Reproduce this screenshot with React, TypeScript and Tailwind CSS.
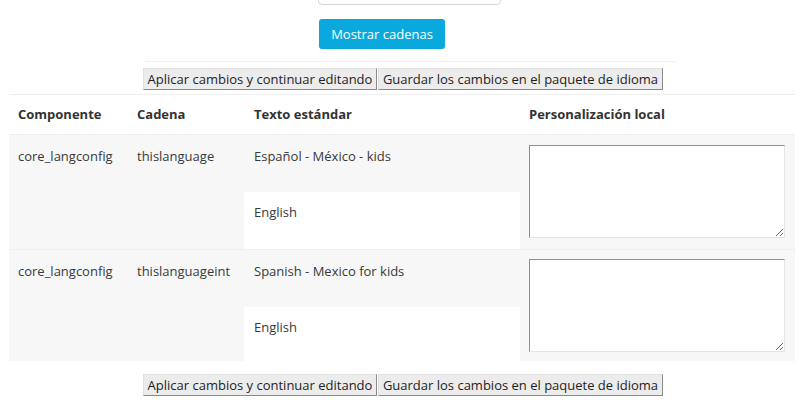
import React from "react";

const rows = [
  { comp: "core_langconfig", str: "thislanguage", std: "Español - México - kids", en: "English" },
  { comp: "core_langconfig", str: "thislanguageint", std: "Spanish - Mexico for kids", en: "English" },
];

function Buttons() {
  return (
    <div className="flex pl-[143px] gap-px">
      <button className="h-[22px] w-[234px] bg-[#ececec] border border-t-[#e0e0e0] border-l-[#e0e0e0] border-r-[#8a8a8a] border-b-[#8a8a8a] text-[13px] leading-[20px] text-[#1e1e1e] whitespace-nowrap">
        Aplicar cambios y continuar editando
      </button>
      <button className="h-[22px] w-[285px] bg-[#ececec] border border-t-[#e0e0e0] border-l-[#e0e0e0] border-r-[#8a8a8a] border-b-[#8a8a8a] text-[13px] leading-[20px] text-[#1e1e1e] whitespace-nowrap">
        Guardar los cambios en el paquete de idioma
      </button>
    </div>
  );
}

export default function App() {
  return (
    <div
      className="w-[800px] h-[409px] overflow-hidden bg-white text-[13px] text-[#373a3c]"
      style={{ fontFamily: '"Open Sans", "Liberation Sans", sans-serif' }}
    >
      <div className="pl-[318px] mt-[-26px]">
        <div className="w-[183px] h-[31px] border border-[#d6d6d6] rounded-[4px] bg-white" />
        <button className="mt-[14px] ml-px w-[126px] h-[30px] rounded-[3px] bg-[#0aa9dd] text-white text-[13px] leading-[30px]">
          Mostrar cadenas
        </button>
      </div>
      <div className="mt-[12px] ml-[145px] w-[531px] h-px bg-[#f0f0f0]" />
      <div className="mt-[6px]">
        <Buttons />
      </div>
      <div className="mt-[4px] ml-[9px] w-[786px]">
        <div className="flex h-[40px] items-center border-t border-[#eeeeee] font-bold text-[13px] text-[#333]">
          <div className="w-[119px] pl-[9px]">Componente</div>
          <div className="w-[116px] pl-[9px]">Cadena</div>
          <div className="w-[276px] pl-[10px]">Texto estándar</div>
          <div className="w-[275px] pl-[9px]">Personalización local</div>
        </div>
        {rows.map((r, i) => (
          <div
            key={i}
            className={`flex bg-[#f7f7f7] border-t border-[#efefef] ${i === 0 ? "h-[115px]" : "h-[112px]"}`}
          >
            <div className="w-[119px] pl-[9px] pt-[11px] leading-[20px]">{r.comp}</div>
            <div className="w-[116px] pl-[9px] pt-[11px] leading-[20px]">{r.str}</div>
            <div className="w-[276px] flex flex-col">
              <div className="h-[57px] pl-[10px] pt-[11px] leading-[20px]">{r.std}</div>
              <div className="flex-1 bg-white pl-[10px] pt-[10px] leading-[20px]">{r.en}</div>
            </div>
            <div className={`w-[275px] pl-[9px] ${i === 0 ? "pt-[10px]" : "pt-[9px]"}`}>
              <textarea
                className="block w-[256px] h-[93px] bg-white border border-t-[#8f8f8f] border-l-[#8f8f8f] border-r-[#e4e4e4] border-b-[#e4e4e4] resize-y"
                defaultValue=""
              />
            </div>
          </div>
        ))}
      </div>
      <div className="mt-[13px]">
        <Buttons />
      </div>
    </div>
  );
}
